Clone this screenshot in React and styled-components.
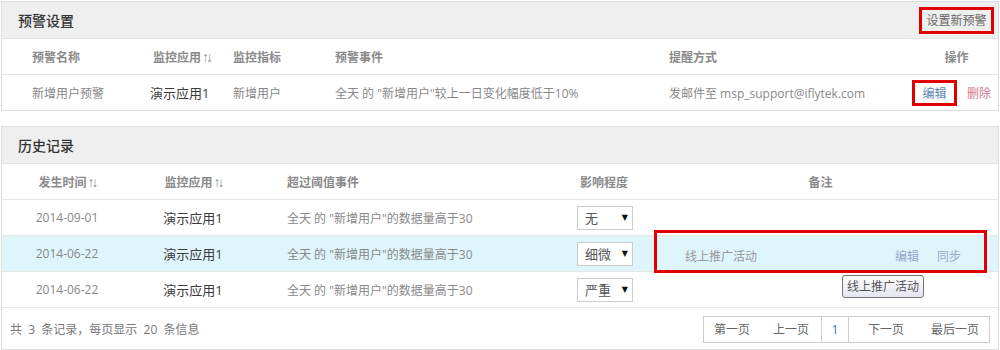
import styled, { createGlobalStyle } from "styled-components";

const GlobalStyle = createGlobalStyle`
  body {
    margin: 0;
    background: #fff;
    font-family: "Open Sans", "Noto Sans CJK SC", sans-serif;
  }
`;

const Page = styled.div`
  width: 1000px;
  height: 350px;
  box-sizing: border-box;
  padding: 1px 1px 0;
  display: flex;
  flex-direction: column;
  gap: 15px;
`;

const Panel = styled.section`
  border: 1px solid #dcdcdc;
`;

const PanelHead = styled.div`
  height: 36px;
  background: #efefef;
  border-bottom: 1px solid #e2e2e2;
  display: flex;
  align-items: center;
  justify-content: space-between;
  padding: 0 7px 0 16px;
`;

const Title = styled.h2`
  margin: 0;
  font-size: 14px;
  font-weight: 500;
  color: #333;
`;

const NewButton = styled.button`
  width: 69px;
  height: 21px;
  padding: 0;
  border: none;
  background: transparent;
  outline: 3px solid #e10000;
  font-family: inherit;
  font-size: 12px;
  color: #666;
`;

const Row = styled.div`
  display: grid;
  grid-template-columns: ${(p) => p.$cols};
  height: 35px;
  align-items: center;
  border-bottom: ${(p) => (p.$last ? "none" : "1px solid #e6e6e6")};
  background: ${(p) => (p.$hl ? "#dff5fc" : "transparent")};
`;

const Cell = styled.div`
  padding-left: ${(p) => p.$pl || 0}px;
  text-align: ${(p) => p.$align || "left"};
  font-size: 12px;
  color: #888;
  white-space: nowrap;
`;

const HeadCell = styled(Cell)`
  font-weight: 700;
  color: #8a8a8a;
`;

const Sort = styled.span`
  font-family: "Liberation Sans", sans-serif;
  font-weight: 400;
  font-size: 14px;
  letter-spacing: -3px;
  color: #8f8f8f;
  margin-left: 1px;
`;

const AppName = styled(Cell)`
  font-size: 13px;
  color: #3a3a3a;
`;

const Actions = styled.div`
  display: flex;
  align-items: center;
`;

const EditLink = styled.span`
  display: inline-flex;
  align-items: center;
  justify-content: center;
  width: 39px;
  height: 20px;
  outline: 3px solid #e10000;
  font-size: 12px;
  color: #5d86b8;
`;

const DeleteLink = styled.span`
  margin-left: 13px;
  font-size: 12px;
  color: #d47a8e;
`;

const Select = styled.div`
  width: 56px;
  height: 24px;
  box-sizing: border-box;
  border: 1px solid #ccc;
  background: #fff;
  display: flex;
  align-items: center;
  justify-content: space-between;
  padding: 0 4px 0 7px;
  font-size: 13px;
  color: #555;
`;

const Caret = styled.span`
  font-family: "DejaVu Sans", sans-serif;
  font-size: 8px;
  color: #111;
`;

const Remark = styled.div`
  position: relative;
  align-self: stretch;
  display: flex;
  align-items: center;
  padding: 5px 23px 0 28px;
  font-size: 12px;
  color: #999;

  &::after {
    content: "";
    position: absolute;
    top: -6px;
    bottom: -2px;
    left: -3px;
    right: -3px;
    border: 3px solid #e10000;
    pointer-events: none;
  }
`;

const RemarkLinks = styled.div`
  margin-left: auto;
  display: flex;
  gap: 18px;
  color: #93a9c9;
`;

const Tooltip = styled.div`
  position: absolute;
  left: 185px;
  top: 39px;
  z-index: 2;
  padding: 1px 4px 2px;
  border: 1px solid #767676;
  border-radius: 3px;
  background: linear-gradient(#ffffff, #e4e5f0);
  font-size: 12px;
  color: #555;
  white-space: nowrap;
`;

const Footer = styled.div`
  height: 40px;
  display: flex;
  align-items: center;
  justify-content: space-between;
  padding: 1px 8px 0;
  font-size: 12px;
  color: #777;
  white-space: pre;
`;

const Pager = styled.div`
  display: flex;
  height: 27px;
  box-sizing: border-box;
  border: 1px solid #ccc;
`;

const PageBtn = styled.span`
  display: flex;
  align-items: center;
  padding: 0 ${(p) => p.$pr}px 0 ${(p) => p.$pl}px;
  font-size: 12px;
  color: #666;
`;

const PageNum = styled.span`
  width: 26px;
  display: flex;
  align-items: center;
  justify-content: center;
  border-left: 1px solid #ccc;
  border-right: 1px solid #ccc;
  font-size: 13px;
  color: #3b7ec2;
`;

const alertCols = "148px 83px 102px 334px 246px 1fr";
const historyCols = "130px 122px 320px 83px 327px 1fr";

const history = [
  { time: "2014-09-01", level: "无" },
  { time: "2014-06-22", level: "细微", remark: "线上推广活动" },
  { time: "2014-06-22", level: "严重" },
];

function App() {
  return (
    <Page>
      <GlobalStyle />
      <Panel>
        <PanelHead>
          <Title>预警设置</Title>
          <NewButton>设置新预警</NewButton>
        </PanelHead>
        <Row $cols={alertCols}>
          <HeadCell $pl={30}>预警名称</HeadCell>
          <HeadCell $pl={3}>
            监控应用<Sort>↑↓</Sort>
          </HeadCell>
          <HeadCell>监控指标</HeadCell>
          <HeadCell>预警事件</HeadCell>
          <HeadCell>提醒方式</HeadCell>
          <HeadCell $align="center">操作</HeadCell>
        </Row>
        <Row $cols={alertCols} $last>
          <Cell $pl={30}>新增用户预警</Cell>
          <AppName>演示应用1</AppName>
          <Cell>新增用户</Cell>
          <Cell>全天 的 "新增用户"较上一日变化幅度低于10%</Cell>
          <Cell>发邮件至 msp_support@iflytek.com</Cell>
          <Actions>
            <EditLink>编辑</EditLink>
            <DeleteLink>删除</DeleteLink>
          </Actions>
        </Row>
      </Panel>

      <Panel>
        <PanelHead>
          <Title>历史记录</Title>
        </PanelHead>
        <Row $cols={historyCols}>
          <HeadCell $align="center">
            发生时间<Sort>↑↓</Sort>
          </HeadCell>
          <HeadCell $align="center">
            监控应用<Sort>↑↓</Sort>
          </HeadCell>
          <HeadCell $pl={33}>超过阈值事件</HeadCell>
          <HeadCell $pl={6}>影响程度</HeadCell>
          <HeadCell $align="center">备注</HeadCell>
          <div />
        </Row>
        {history.map((h, i) => (
          <Row key={i} $cols={historyCols} $hl={!!h.remark}>
            <Cell $align="center">{h.time}</Cell>
            <AppName $align="center">演示应用1</AppName>
            <Cell $pl={33}>全天 的 "新增用户"的数据量高于30</Cell>
            <Cell $pl={3}>
              <Select>
                {h.level}
                <Caret>▼</Caret>
              </Select>
            </Cell>
            {h.remark ? (
              <Remark>
                {h.remark}
                <RemarkLinks>
                  <span>编辑</span>
                  <span>同步</span>
                </RemarkLinks>
                <Tooltip>{h.remark}</Tooltip>
              </Remark>
            ) : (
              <div />
            )}
            <div />
          </Row>
        ))}
        <Footer>
          <span>共  3  条记录，每页显示  20  条信息</span>
          <Pager>
            <PageBtn $pl={10} $pr={12}>第一页</PageBtn>
            <PageBtn $pl={11} $pr={12}>上一页</PageBtn>
            <PageNum>1</PageNum>
            <PageBtn $pl={19} $pr={13}>下一页</PageBtn>
            <PageBtn $pl={14} $pr={10}>最后一页</PageBtn>
          </Pager>
        </Footer>
      </Panel>
    </Page>
  );
}

export default App;
